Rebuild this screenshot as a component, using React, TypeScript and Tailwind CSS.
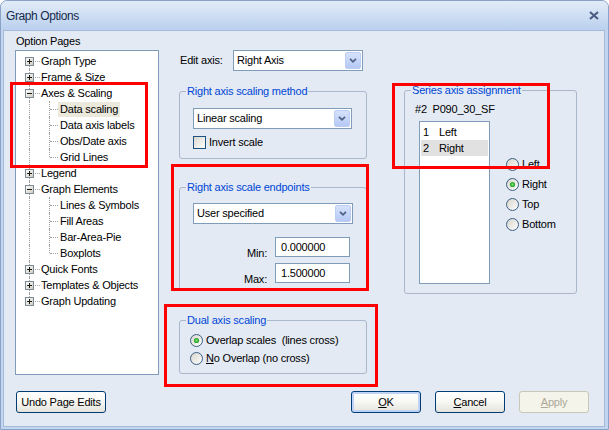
import React from 'react';

type Node = { label: string; level: 1 | 2; open?: boolean; last?: boolean; selected?: boolean };

const tree: Node[] = [
  { label: 'Graph Type', level: 1 },
  { label: 'Frame & Size', level: 1 },
  { label: 'Axes & Scaling', level: 1, open: true },
  { label: 'Data scaling', level: 2, selected: true },
  { label: 'Data axis labels', level: 2 },
  { label: 'Obs/Date axis', level: 2 },
  { label: 'Grid Lines', level: 2, last: true },
  { label: 'Legend', level: 1 },
  { label: 'Graph Elements', level: 1, open: true },
  { label: 'Lines & Symbols', level: 2 },
  { label: 'Fill Areas', level: 2 },
  { label: 'Bar-Area-Pie', level: 2 },
  { label: 'Boxplots', level: 2, last: true },
  { label: 'Quick Fonts', level: 1 },
  { label: 'Templates & Objects', level: 1 },
  { label: 'Graph Updating', level: 1 },
];

const Expander = ({ open }: { open?: boolean }) => (
  <svg width="9" height="9" viewBox="0 0 9 9" className="absolute left-[9px] top-[4px]">
    <defs>
      <linearGradient id="exp" x1="0" y1="0" x2="1" y2="1">
        <stop offset="0" stopColor="#ffffff" />
        <stop offset="1" stopColor="#cdcabb" />
      </linearGradient>
    </defs>
    <rect x="0.5" y="0.5" width="8" height="8" fill="url(#exp)" stroke="#7c8b98" />
    <path d="M2 4.5H7" stroke="#1a1a1a" />
    {!open && <path d="M4.5 2V7" stroke="#1a1a1a" />}
  </svg>
);

function TreeRow({ node, index }: { node: Node; index: number }) {
  const isFirst = index === 0;
  const isLast = index === tree.length - 1;
  const trunk = isFirst ? 'top-[8px] bottom-0' : isLast ? 'top-0 h-[8px]' : 'top-0 bottom-0';
  return (
    <div className="relative h-[16px]">
      <span className={`absolute left-[13px] border-l border-dotted border-[#a0a0a0] ${trunk}`} />
      {node.level === 1 ? (
        <>
          <span className="absolute left-[14px] top-[8px] w-[10px] border-t border-dotted border-[#a0a0a0]" />
          <Expander open={node.open} />
          <div className="pl-[25px] leading-[16px]">{node.label}</div>
        </>
      ) : (
        <>
          <span className={`absolute left-[33px] border-l border-dotted border-[#a0a0a0] ${node.last ? 'top-0 h-[8px]' : 'top-0 bottom-0'}`} />
          <span className="absolute left-[34px] top-[8px] w-[8px] border-t border-dotted border-[#a0a0a0]" />
          <div className={`ml-[42px] mt-[1px] inline-block h-[15px] px-[2px] leading-[15px] ${node.selected ? 'bg-[#ebe8dc]' : ''}`}>{node.label}</div>
        </>
      )}
    </div>
  );
}

const Chevron = () => (
  <svg width="8" height="5" viewBox="0 0 8 5">
    <path d="M1 0.8L4 3.8L7 0.8" fill="none" stroke="#4d6185" strokeWidth="1.7" />
  </svg>
);

function Combo({ value, className }: { value: string; className: string }) {
  return (
    <div className={`flex h-[21px] border border-[#7f9db9] bg-white ${className}`}>
      <span className="flex-1 pl-[3px] leading-[19px]">{value}</span>
      <span className="m-[1px] flex w-[16px] items-center justify-center rounded-[2px] border border-[#bccdf3] bg-gradient-to-b from-[#d6e2fc] to-[#b6c9f5]">
        <Chevron />
      </span>
    </div>
  );
}

const Radio = ({ checked }: { checked?: boolean }) => (
  <svg width="13" height="13" viewBox="0 0 13 13" className="shrink-0">
    <defs>
      <linearGradient id="rg" x1="0" y1="0" x2="1" y2="1">
        <stop offset="0" stopColor="#d6d3c8" />
        <stop offset="1" stopColor="#ffffff" />
      </linearGradient>
      <radialGradient id="rd">
        <stop offset="0" stopColor="#7ae875" />
        <stop offset="1" stopColor="#1f981f" />
      </radialGradient>
    </defs>
    <circle cx="6.5" cy="6.5" r="6" fill="url(#rg)" stroke="#3a5f86" />
    {checked && <circle cx="6.5" cy="6.5" r="2.6" fill="url(#rd)" />}
  </svg>
);

const Checkbox = () => (
  <svg width="13" height="13" viewBox="0 0 13 13" className="shrink-0">
    <defs>
      <linearGradient id="cg" x1="0" y1="0" x2="1" y2="1">
        <stop offset="0" stopColor="#d8d6cc" />
        <stop offset="1" stopColor="#ffffff" />
      </linearGradient>
    </defs>
    <rect x="0.5" y="0.5" width="12" height="12" fill="url(#cg)" stroke="#1c5180" />
  </svg>
);

function Btn({ children, className = '', primary, disabled }: { children: React.ReactNode; className?: string; primary?: boolean; disabled?: boolean }) {
  const look = disabled
    ? 'border-[#c9c7ba] bg-[#f5f4ea] text-[#aca899]'
    : `border-[#003c74] bg-gradient-to-b from-[#ffffff] via-[#f7f7f3] to-[#e4e3dc] ${primary ? 'shadow-[inset_0_0_0_2px_#bfd3f6]' : ''}`;
  return (
    <div className={`flex h-[22px] items-center justify-center rounded-[3px] border ${look} ${className}`}>{children}</div>
  );
}

const legendCls = 'ml-[6px] px-[1px] leading-[13px] text-[#0046d5]';
const groupCls = 'rounded-[3px] border border-[#a9b8cd]';

export default function App() {
  return (
    <div className="relative h-[430px] w-[609px] overflow-hidden rounded-t-[7px] border border-[#8aa2c6] bg-[#c3d6ef] font-['Liberation_Sans',Arial,sans-serif] text-[11px] tracking-[-0.2px] text-black">
      {/* title bar */}
      <div className="flex h-[29px] items-center justify-between bg-gradient-to-b from-[#e2ecf8] to-[#bad0ee] pl-[5px] pr-[9px]">
        <span className="text-[12px] tracking-[-0.4px] text-[#15294b]">Graph Options</span>
        <svg width="10" height="9" viewBox="0 0 10 9">
          <path d="M1 1L9 8M9 1L1 8" stroke="#4b5f83" strokeWidth="2.2" />
        </svg>
      </div>

      {/* body */}
      <div className="ml-[2px] mr-[3px] h-[397px] border border-[#a4bad9] bg-[#e3eaf4] pt-[4px]">
        <div className="flex items-start pl-[11px]">
          {/* option pages */}
          <div className="flex w-[144px] flex-col">
            <div className="h-[15px] pl-[1px] leading-[13px]">Option Pages</div>
            <div className="h-[325px] border border-[#7f9db9] bg-white pt-[2px]">
              {tree.map((n, i) => (
                <TreeRow key={n.label} node={n} index={i} />
              ))}
            </div>
          </div>

          {/* middle column */}
          <div className="ml-[20px] mt-[15px] flex w-[188px] flex-col">
            <div className="flex h-[21px] items-center">
              <span className="ml-[1px] w-[53px]">Edit axis:</span>
              <Combo value="Right Axis" className="w-[130px]" />
            </div>

            <fieldset className={`mt-[14px] ${groupCls}`}>
              <legend className={legendCls}>Right axis scaling method</legend>
              <div className="pb-[9px] pl-[13px] pt-[10px]">
                <Combo value="Linear scaling" className="w-[159px]" />
                <div className="mt-[7px] flex h-[13px] items-center gap-[3px]">
                  <Checkbox />
                  <span className="leading-[13px]">Invert scale</span>
                </div>
              </div>
            </fieldset>

            <fieldset className={`mt-[22px] ${groupCls}`}>
              <legend className={legendCls}>Right axis scale endpoints</legend>
              <div className="pb-[7px] pl-[13px] pt-[9px]">
                <Combo value="User specified" className="w-[160px]" />
                <div className="mt-[13px] flex h-[20px] items-end">
                  <span className="-mb-[3px] w-[74px] text-right leading-[13px]">Min:</span>
                  <div className="ml-[8px] h-[20px] w-[75px] border border-[#7f9db9] bg-white pl-[5px] leading-[18px]">0.000000</div>
                </div>
                <div className="mt-[6px] flex h-[20px] items-end">
                  <span className="-mb-[3px] w-[74px] text-right leading-[13px]">Max:</span>
                  <div className="ml-[8px] h-[20px] w-[75px] border border-[#7f9db9] bg-white pl-[5px] leading-[18px]">1.500000</div>
                </div>
              </div>
            </fieldset>

            <fieldset className={`mt-[23px] ${groupCls}`}>
              <legend className={legendCls}>Dual axis scaling</legend>
              <div className="pb-[8px] pl-[10px] pt-[7px]">
                <div className="flex h-[13px] items-center gap-[3px]">
                  <Radio checked />
                  <span className="whitespace-pre leading-[13px]">Overlap scales  (lines cross)</span>
                </div>
                <div className="mt-[5px] flex h-[13px] items-center gap-[3px]">
                  <Radio />
                  <span className="leading-[13px]">
                    <span className="underline">N</span>o Overlap (no cross)
                  </span>
                </div>
              </div>
            </fieldset>
          </div>

          {/* series axis assignment */}
          <fieldset className={`ml-[37px] mt-[49px] w-[173px] ${groupCls}`}>
            <legend className={legendCls}>Series axis assignment</legend>
            <div className="pb-[9px] pl-[10px] pt-[6px]">
              <div className="whitespace-pre leading-[13px]">#2  P090_30_SF</div>
              <div className="mt-[5px] flex items-start">
                <div className="ml-[4px] h-[163px] w-[71px] border border-[#7f9db9] bg-white pt-[2px]">
                  <div className="mx-[1px] flex h-[16px] items-center pl-[2px]">
                    <span className="w-[16px]">1</span>
                    <span>Left</span>
                  </div>
                  <div className="mx-[1px] flex h-[16px] items-center bg-[#e1e1e1] pl-[2px]">
                    <span className="w-[16px]">2</span>
                    <span>Right</span>
                  </div>
                </div>
                <div className="ml-[16px] mt-[33px] flex flex-col">
                  {['Left', 'Right', 'Top', 'Bottom'].map((s) => (
                    <div key={s} className="flex h-[20px] items-center gap-[3px]">
                      <Radio checked={s === 'Right'} />
                      <span className="leading-[13px]">{s}</span>
                    </div>
                  ))}
                </div>
              </div>
            </div>
          </fieldset>
        </div>

        {/* buttons */}
        <div className="mt-[16px] flex pl-[12px]">
          <Btn className="w-[90px]">Undo Page Edits</Btn>
          <Btn primary className="ml-[245px] w-[70px]">
            <span className="underline">O</span>K
          </Btn>
          <Btn className="ml-[14px] w-[70px]">
            <span className="underline">C</span>ancel
          </Btn>
          <Btn disabled className="ml-[14px] w-[70px]">
            <span className="underline">A</span>pply
          </Btn>
        </div>
      </div>

      {/* red annotation boxes */}
      <div className="absolute left-[9px] top-[81px] h-[86px] w-[138px] border-[3px] border-[#ff0000]" />
      <div className="absolute left-[170px] top-[163px] h-[127px] w-[198px] border-[3px] border-[#ff0000]" />
      <div className="absolute left-[163px] top-[303px] h-[83px] w-[214px] border-[3px] border-[#ff0000]" />
      <div className="absolute left-[391px] top-[82px] h-[86px] w-[158px] border-[3px] border-[#ff0000]" />
    </div>
  );
}
